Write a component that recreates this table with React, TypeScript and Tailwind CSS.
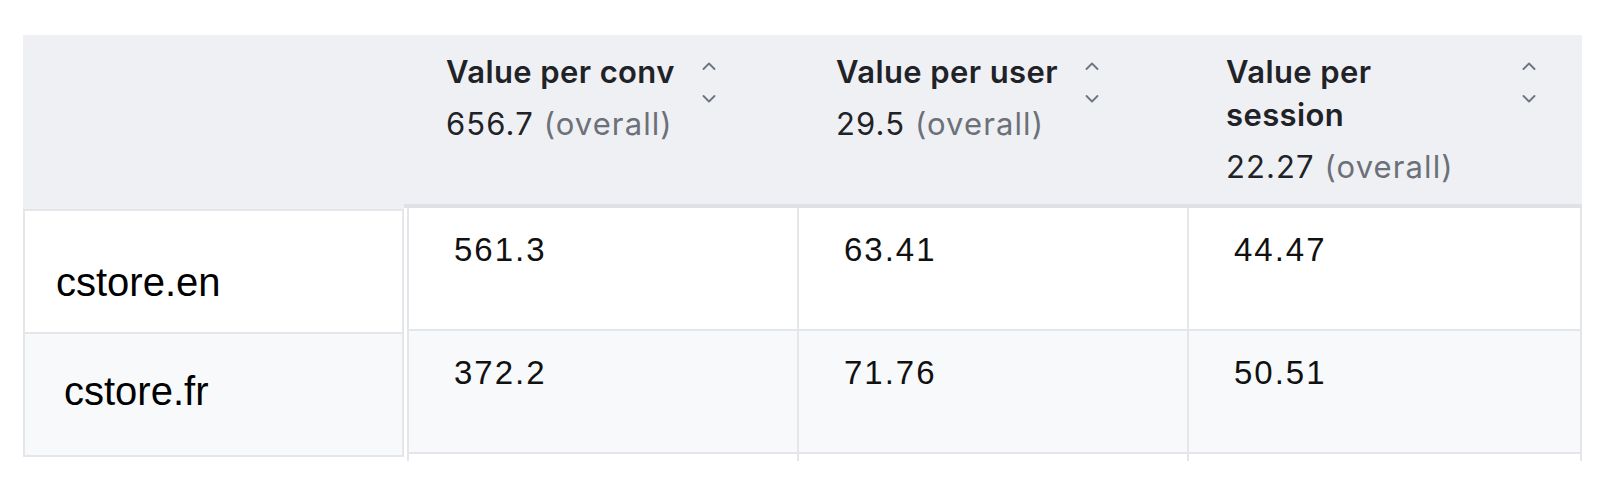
import React from 'react';

interface Column {
  title: string;
  overall: string;
  pl: string;
}

interface Row {
  label: string;
  labelPad: string;
  values: string[];
  bg: string;
}

const columns: Column[] = [
  { title: 'Value per conv', overall: '656.7', pl: 'pl-[42px]' },
  { title: 'Value per user', overall: '29.5', pl: 'pl-[39px]' },
  { title: 'Value per session', overall: '22.27', pl: 'pl-[39px]' },
];

const rows: Row[] = [
  { label: 'cstore.en', labelPad: 'pl-[31px] pt-[48px]', values: ['561.3', '63.41', '44.47'], bg: 'bg-white' },
  { label: 'cstore.fr', labelPad: 'pl-[39px] pt-[34px]', values: ['372.2', '71.76', '50.51'], bg: 'bg-[#f8f9fb]' },
];

const SortIcon = () => (
  <svg width="14" height="42" viewBox="0 0 14 42" fill="none" className="ml-[27px] mt-[12px] flex-none">
    <path d="M1.5 7 L7 1.5 L12.5 7" stroke="#6e7480" strokeWidth="1.9" strokeLinecap="round" strokeLinejoin="round" />
    <path d="M1.5 34 L7 39.5 L12.5 34" stroke="#6e7480" strokeWidth="1.9" strokeLinecap="round" strokeLinejoin="round" />
  </svg>
);

const cellBorder = (i: number) =>
  i === 0 ? 'ml-[3px] border-l-2' : i === 2 ? 'border-l-2 border-r-2' : 'border-l-2';

export default function App() {
  return (
    <div className="min-h-screen bg-white pl-[23px] pt-[35px]">
      <div className="flex items-start">
        {/* sticky label column */}
        <div className="w-[381px] flex-none">
          <div className="h-[174px] bg-[#eff0f3]" />
          <div className="border-2 border-[#e4e6ea]">
            {rows.map((row, r) => (
              <div
                key={row.label}
                className={`${r === 0 ? 'h-[123px] border-b-2 border-[#e4e6ea]' : 'h-[121px]'} ${row.bg} ${row.labelPad}`}
              >
                <span className="font-['Liberation_Sans',Arial,sans-serif] text-[40px] leading-[46px] text-black">
                  {row.label}
                </span>
              </div>
            ))}
          </div>
        </div>

        {/* metric columns */}
        <div className="w-[1178px] flex-none">
          <div className="grid grid-cols-[393px_390px_395px] border-b-4 border-[#dfe1e6] bg-[#eff0f3] font-[Inter,sans-serif]">
            {columns.map((col) => (
              <div key={col.title} className={`flex items-start pb-[16px] pr-[46px] pt-[15px] ${col.pl}`}>
                <div className="min-w-0">
                  <div className="text-[31px] font-semibold leading-[43px] tracking-[0.4px] text-[#1f2328]">
                    {col.title}
                  </div>
                  <div className="mt-[9px] text-[31px] leading-[43px] tracking-[1.1px] text-[#1f2328]">
                    {col.overall} <span className="text-[#6b7079]">(overall)</span>
                  </div>
                </div>
                <SortIcon />
              </div>
            ))}
          </div>

          <div className="h-[253px] overflow-hidden">
            {[...rows, null].map((row, r) => (
              <div key={r} className="grid grid-cols-[393px_390px_395px]">
                {[0, 1, 2].map((i) => (
                  <div
                    key={i}
                    className={`h-[123px] border-b-2 border-[#e4e6ea] ${cellBorder(i)} ${row ? row.bg : 'bg-white'} pl-[45px] pt-[22px]`}
                  >
                    {row && (
                      <span className="font-['Liberation_Sans',Arial,sans-serif] text-[33px] leading-[40px] tracking-[2px] text-[#111]">
                        {row.values[i]}
                      </span>
                    )}
                  </div>
                ))}
              </div>
            ))}
          </div>
        </div>
      </div>
    </div>
  );
}
